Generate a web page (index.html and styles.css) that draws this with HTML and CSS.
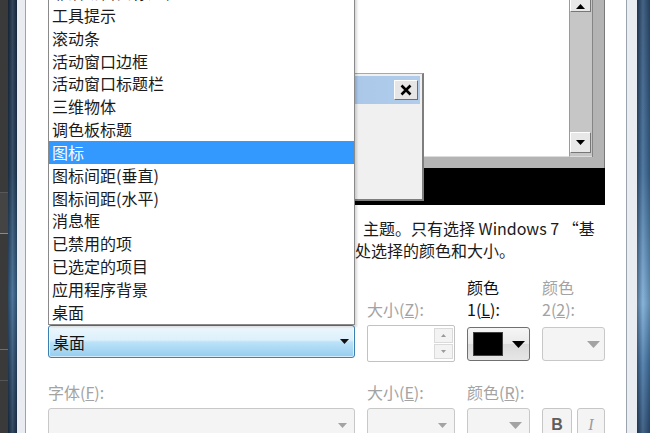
FILE: index.html
```html
<!DOCTYPE html>
<html lang="zh-CN">
<head>
    <meta charset="UTF-8">
    <meta name="viewport" content="width=device-width, initial-scale=1.0">
    <title>窗口颜色和外观</title>
    <link rel="stylesheet" href="styles.css">
</head>
<body>
    <div class="desk">
        <div class="desk-box"></div>
        <div class="desk-line"></div>
        <div class="desk-line dim"></div>
    </div>
    <div class="frame frame-left">
        <div class="glass"></div>
        <div class="rim"></div>
    </div>

    <div class="dialog">
        <!-- preview of the current scheme -->
        <div class="preview">
            <div class="pv-window"></div>
            <div class="pv-scroll">
                <div class="sb-btn up"><svg width="9" height="5" viewBox="0 0 9 5"><polygon points="0,5 9,5 4.5,0" fill="#000"/></svg></div>
                <div class="sb-btn"><svg width="9" height="5" viewBox="0 0 9 5"><polygon points="0,0 9,0 4.5,5" fill="#000"/></svg></div>
            </div>
            <div class="pv-side"></div>
            <div class="pv-band"></div>
            <div class="pv-black"></div>
            <div class="msgbox">
                <div class="msg-title">
                    <span class="msg-close"><svg width="12" height="12" viewBox="0 0 12 12"><path d="M1.5 1.5L10.5 10.5M10.5 1.5L1.5 10.5" stroke="#000" stroke-width="2.6"/></svg></span>
                </div>
            </div>
        </div>

        <p class="note">
            <span class="note-line first">主题。只有选择 Windows 7 “基</span>
            <span class="note-line">处选择的颜色和大小。</span>
        </p>

        <div class="form">
            <div class="label"></div>
            <div class="label off"><span>大小(<u>Z</u>):</span></div>
            <div class="label strong"><span>颜色</span><span>1(<u>L</u>):</span></div>
            <div class="label off"><span>颜色</span><span>2(<u>2</u>):</span></div>

            <div class="combo active">
                <span>桌面</span>
                <svg width="9" height="5" viewBox="0 0 9 5"><polygon points="0,0 9,0 4.5,5" fill="#111"/></svg>
            </div>
            <div class="spin">
                <div class="spin-btns">
                    <span><svg width="5" height="3" viewBox="0 0 5 3"><polygon points="0,3 5,3 2.5,0" fill="#9a9a9a"/></svg></span>
                    <span><svg width="5" height="3" viewBox="0 0 5 3"><polygon points="0,0 5,0 2.5,3" fill="#9a9a9a"/></svg></span>
                </div>
            </div>
            <div class="color-btn">
                <span class="swatch"></span>
                <svg width="13" height="7" viewBox="0 0 13 7"><polygon points="0,0 13,0 6.5,7" fill="#000"/></svg>
            </div>
            <div class="color-btn off">
                <svg width="13" height="7" viewBox="0 0 13 7"><polygon points="0,0 13,0 6.5,7" fill="#a3a3a3"/></svg>
            </div>

            <div class="label off"><span>字体(<u>F</u>):</span></div>
            <div class="label off"><span>大小(<u>E</u>):</span></div>
            <div class="label off"><span>颜色(<u>R</u>):</span></div>
            <div class="label"></div>

            <div class="combo off">
                <svg width="9" height="5" viewBox="0 0 9 5"><polygon points="0,0 9,0 4.5,5" fill="#a3a3a3"/></svg>
            </div>
            <div class="combo off">
                <svg width="9" height="5" viewBox="0 0 9 5"><polygon points="0,0 9,0 4.5,5" fill="#a3a3a3"/></svg>
            </div>
            <div class="combo off">
                <svg width="13" height="7" viewBox="0 0 13 7"><polygon points="0,0 13,0 6.5,7" fill="#a3a3a3"/></svg>
            </div>
            <div class="style-btns">
                <span class="style-btn bold">B</span>
                <span class="style-btn italic">I</span>
            </div>
        </div>

        <!-- open drop-down of the item combo -->
        <ul class="droplist">
            <li>非活动窗口标题栏</li>
            <li>工具提示</li>
            <li>滚动条</li>
            <li>活动窗口边框</li>
            <li>活动窗口标题栏</li>
            <li>三维物体</li>
            <li>调色板标题</li>
            <li class="selected">图标</li>
            <li>图标间距(垂直)</li>
            <li>图标间距(水平)</li>
            <li>消息框</li>
            <li>已禁用的项</li>
            <li>已选定的项目</li>
            <li>应用程序背景</li>
            <li>桌面</li>
        </ul>
    </div>

    <div class="frame frame-right">
        <div class="rim"></div>
        <div class="glass"></div>
    </div>
</body>
</html>
```

FILE: styles.css
```css
body {
    margin: 0;
    height: 433px;
    overflow: hidden;
    display: flex;
    background: #3a3a3a;
    font-family: "Noto Sans CJK SC", "Noto Sans", sans-serif;
    font-size: 16px;
    color: #1a1a1a;
}

/* strip of desktop behind the window */
.desk {
    width: 8px;
    flex: none;
    display: flex;
    flex-direction: column;
}

.desk-box {
    margin-top: 192px;
    height: 40px;
    border-top: 1px solid #585858;
    border-bottom: 1px solid #8a8a8a;
    background: #444;
}

.desk-line {
    margin-top: 115px;
    height: 1px;
    background: #6e6e6e;
}

.desk-line.dim {
    margin-top: 30px;
    background: #555;
}

/* aero window frame */
.frame {
    flex: none;
    display: flex;
}

.frame-left {
    width: 18px;
}

.frame-right {
    width: 24px;
}

.frame-left .glass {
    width: 9px;
    background:
        linear-gradient(to right, rgba(0, 0, 0, 0.3), rgba(255, 255, 255, 0.1) 50%, rgba(0, 0, 0, 0.25)),
        linear-gradient(#1c3049, #223d5b 40%, #3b6790 68%, #2a4a6c 85%, #1e3550);
}

.frame-right .glass {
    width: 13px;
    background:
        linear-gradient(to right, rgba(0, 0, 0, 0.35), rgba(255, 255, 255, 0.12) 45%, rgba(0, 0, 0, 0.2)),
        linear-gradient(#2b4d73, #3a6896 40%, #78aad6 70%, #4476a6 84%, #2b4f78);
}

.frame-left .rim {
    flex: 1;
    background: #e9edf1;
    border-right: 1px solid #9ba4ad;
}

.frame-right .rim {
    flex: 1;
    background: #e9edf1;
    border-left: 1px solid #9ba4ad;
}

.dialog {
    flex: 1;
    position: relative;
    overflow: hidden;
    background: #fff;
}

/* scheme preview */
.preview {
    position: relative;
    margin-left: 22px;
    width: 557px;
    height: 205px;
    display: grid;
    grid-template-columns: 1fr 22px 13px;
    grid-template-rows: 157px 11px 37px;
    background: #b4b4b4;
    box-shadow: inset -1px 0 0 #7a7a7a;
}

.pv-window {
    background: #fff;
    border-right: 1px solid #9a9a9a;
    border-bottom: 1px solid #dcdcdc;
}

.pv-scroll {
    display: flex;
    flex-direction: column;
    justify-content: space-between;
    padding-bottom: 3px;
    background: #c6c6c6;
    border-bottom: 1px solid #dcdcdc;
}

.sb-btn {
    box-sizing: border-box;
    width: 21px;
    height: 21px;
    display: flex;
    align-items: center;
    justify-content: center;
    background: #e8e8e8;
    border: 1px solid;
    border-color: #fff #777 #777 #fff;
}

.sb-btn.up {
    margin-top: -9px;
    padding-top: 10px;
}

.pv-side {
    border-left: 1px solid #858585;
}

.pv-band {
    grid-column: 1 / -1;
}

.pv-black {
    grid-column: 1 / -1;
    background: #000;
}

.msgbox {
    position: absolute;
    left: 150px;
    top: 73px;
    width: 226px;
    height: 128px;
    box-sizing: border-box;
    background: #f0f0f0;
    border: 1px solid #a8a8a8;
    border-right: 2px solid #7e7e7e;
    border-bottom: 2px solid #7e7e7e;
}

.msg-title {
    height: 28px;
    margin: 2px;
    display: flex;
    align-items: center;
    justify-content: flex-end;
    padding-right: 2px;
    background: linear-gradient(to right, #98bce6, #b2cdeb);
}

.msg-close {
    box-sizing: border-box;
    width: 24px;
    height: 20px;
    display: flex;
    align-items: center;
    justify-content: center;
    background: #e6e6e6;
    border: 1px solid;
    border-color: #fff #6e6e6e #6e6e6e #fff;
}

.note {
    margin: 12px 0 0;
    padding-left: 329px;
    line-height: 22px;
    white-space: nowrap;
}

.note-line {
    display: block;
}

.note-line.first {
    padding-left: 8px;
}

/* item / font controls */
.form {
    display: grid;
    grid-template-columns: 307px 88px 63px 63px;
    grid-template-rows: 44px 61px 22px 40px;
    column-gap: 12px;
    margin: 15px 0 0 22px;
}

.label {
    display: flex;
    flex-direction: column;
    justify-content: flex-end;
    line-height: 22px;
    white-space: nowrap;
}

.label.strong {
    color: #111;
}

.off {
    color: #a3a3a3;
}

.combo {
    box-sizing: border-box;
    margin-top: 5px;
    height: 34px;
    display: flex;
    align-items: center;
    justify-content: space-between;
    padding: 0 5px 0 4px;
    border-radius: 3px;
}

.combo.active {
    height: 33px;
    border: 1px solid #3c7fb1;
    background: linear-gradient(#edf7fd, #dcf0fb 45%, #bce2f8 52%, #96cdf0);
    box-shadow: inset 0 0 0 1px rgba(255, 255, 255, 0.6);
    color: #111;
}

.combo.off {
    justify-content: flex-end;
    padding-right: 7px;
    border: 1px solid #c8c8c8;
    background: #f4f4f4;
}

.spin {
    box-sizing: border-box;
    margin-top: 5px;
    height: 37px;
    display: flex;
    justify-content: flex-end;
    padding: 2px 1px;
    border: 1px solid #c2c2c2;
    border-radius: 2px;
    background: #fff;
}

.spin-btns {
    width: 19px;
    display: flex;
    flex-direction: column;
    gap: 1px;
}

.spin-btns span {
    flex: 1;
    display: flex;
    align-items: center;
    justify-content: center;
    background: #f3f3f3;
    border: 1px solid #dadada;
}

.color-btn {
    box-sizing: border-box;
    margin-top: 7px;
    height: 34px;
    display: flex;
    align-items: center;
    gap: 9px;
    padding-left: 5px;
    border: 1px solid #707070;
    border-radius: 3px;
    background: linear-gradient(#f6f6f6, #e9e9e9 50%, #dadada 51%, #e6e6e6);
}

.color-btn.off {
    justify-content: flex-end;
    padding-right: 4px;
    border-color: #c8c8c8;
    background: #f4f4f4;
}

.swatch {
    width: 30px;
    height: 24px;
    box-sizing: border-box;
    background: #000;
    border: 1px solid #404040;
}

.style-btns {
    margin-top: 5px;
    display: flex;
    gap: 5px;
}

.style-btn {
    box-sizing: border-box;
    height: 34px;
    display: flex;
    align-items: center;
    justify-content: center;
    border: 1px solid #c6c6c6;
    border-radius: 3px;
    background: #f4f4f4;
}

.style-btn.bold {
    width: 30px;
    font-family: "Liberation Sans", sans-serif;
    font-weight: bold;
    color: #5e5e5e;
}

.style-btn.italic {
    width: 28px;
    font-family: "Liberation Serif", serif;
    font-style: italic;
    color: #9c9c9c;
}

/* the open list */
.droplist {
    position: absolute;
    left: 22px;
    top: -20px;
    width: 307px;
    box-sizing: border-box;
    margin: 0;
    padding: 0;
    list-style: none;
    background: #fff;
    border: 1px solid #8a8a8a;
    box-shadow: 2px 2px 2px rgba(0, 0, 0, 0.15);
}

.droplist li {
    height: 22.85px;
    line-height: 22.85px;
    padding-left: 3px;
    color: #1a1a1a;
    white-space: nowrap;
}

.droplist li.selected {
    background: #3399ff;
    color: #fff;
}
```
